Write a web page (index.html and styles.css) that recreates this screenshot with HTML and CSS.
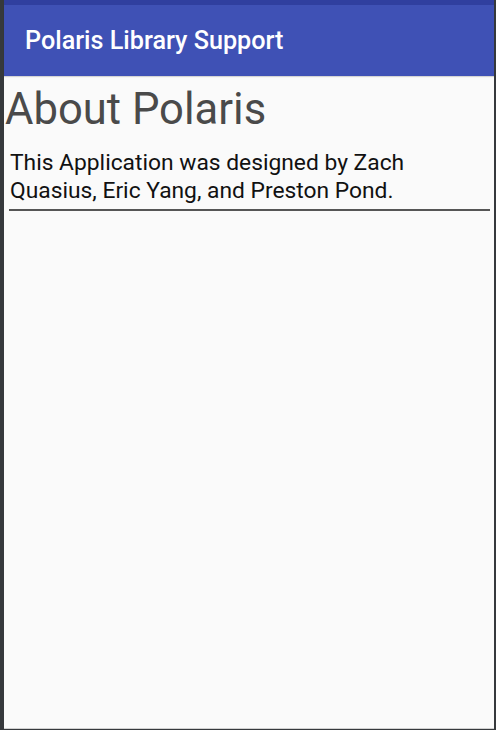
FILE: index.html
```html
<!DOCTYPE html>
<html>
<head>
<meta charset="utf-8">
<link rel="stylesheet" href="styles.css">
</head>
<body>
<div class="device">
  <div class="status-bar"></div>
  <header class="app-bar"><h1 class="app-title">Polaris Library Support</h1></header>
  <main class="content">
    <h2 class="heading">About Polaris</h2>
    <p class="body-text">This Application was designed by Zach Quasius, Eric Yang, and Preston Pond.</p>
    <hr class="divider">
  </main>
</div>
</body>
</html>
```
FILE: styles.css
```css
html, body {
  margin: 0;
  padding: 0;
  height: 100%;
}
body {
  background: #36393c;
  font-family: Roboto, "Noto Sans", sans-serif;
}
.device {
  box-sizing: border-box;
  height: 730px;
  padding: 0 2px 1px 4px;
  display: flex;
  flex-direction: column;
}
.status-bar {
  height: 5px;
  background: #303f9f;
  flex: none;
}
.app-bar {
  height: 71px;
  flex: none;
  background: #3f51b5;
  display: flex;
  align-items: center;
  padding-left: 21px;
  box-shadow: 0 1px 1px rgba(0,0,0,0.15);
  position: relative;
  z-index: 1;
}
.app-title {
  margin: 0;
  color: #ffffff;
  font-weight: 500;
  font-size: 25.2px;
}
.content {
  flex: 1;
  background: #fafafa;
  border-bottom: 1px solid #d0d0d0;
  padding: 0 4px 0 1px;
}
.heading {
  margin: 8px 0 0 0;
  font-weight: 400;
  font-size: 43.6px;
  line-height: 52px;
  color: #4a4a4a;
}
.body-text {
  margin: 13px 0 0 5px;
  font-size: 22.8px;
  line-height: 28.3px;
  color: #111;
}
.divider {
  margin: 3px 0 0 4px;
  border: none;
  height: 2px;
  background: #555;
}
```
